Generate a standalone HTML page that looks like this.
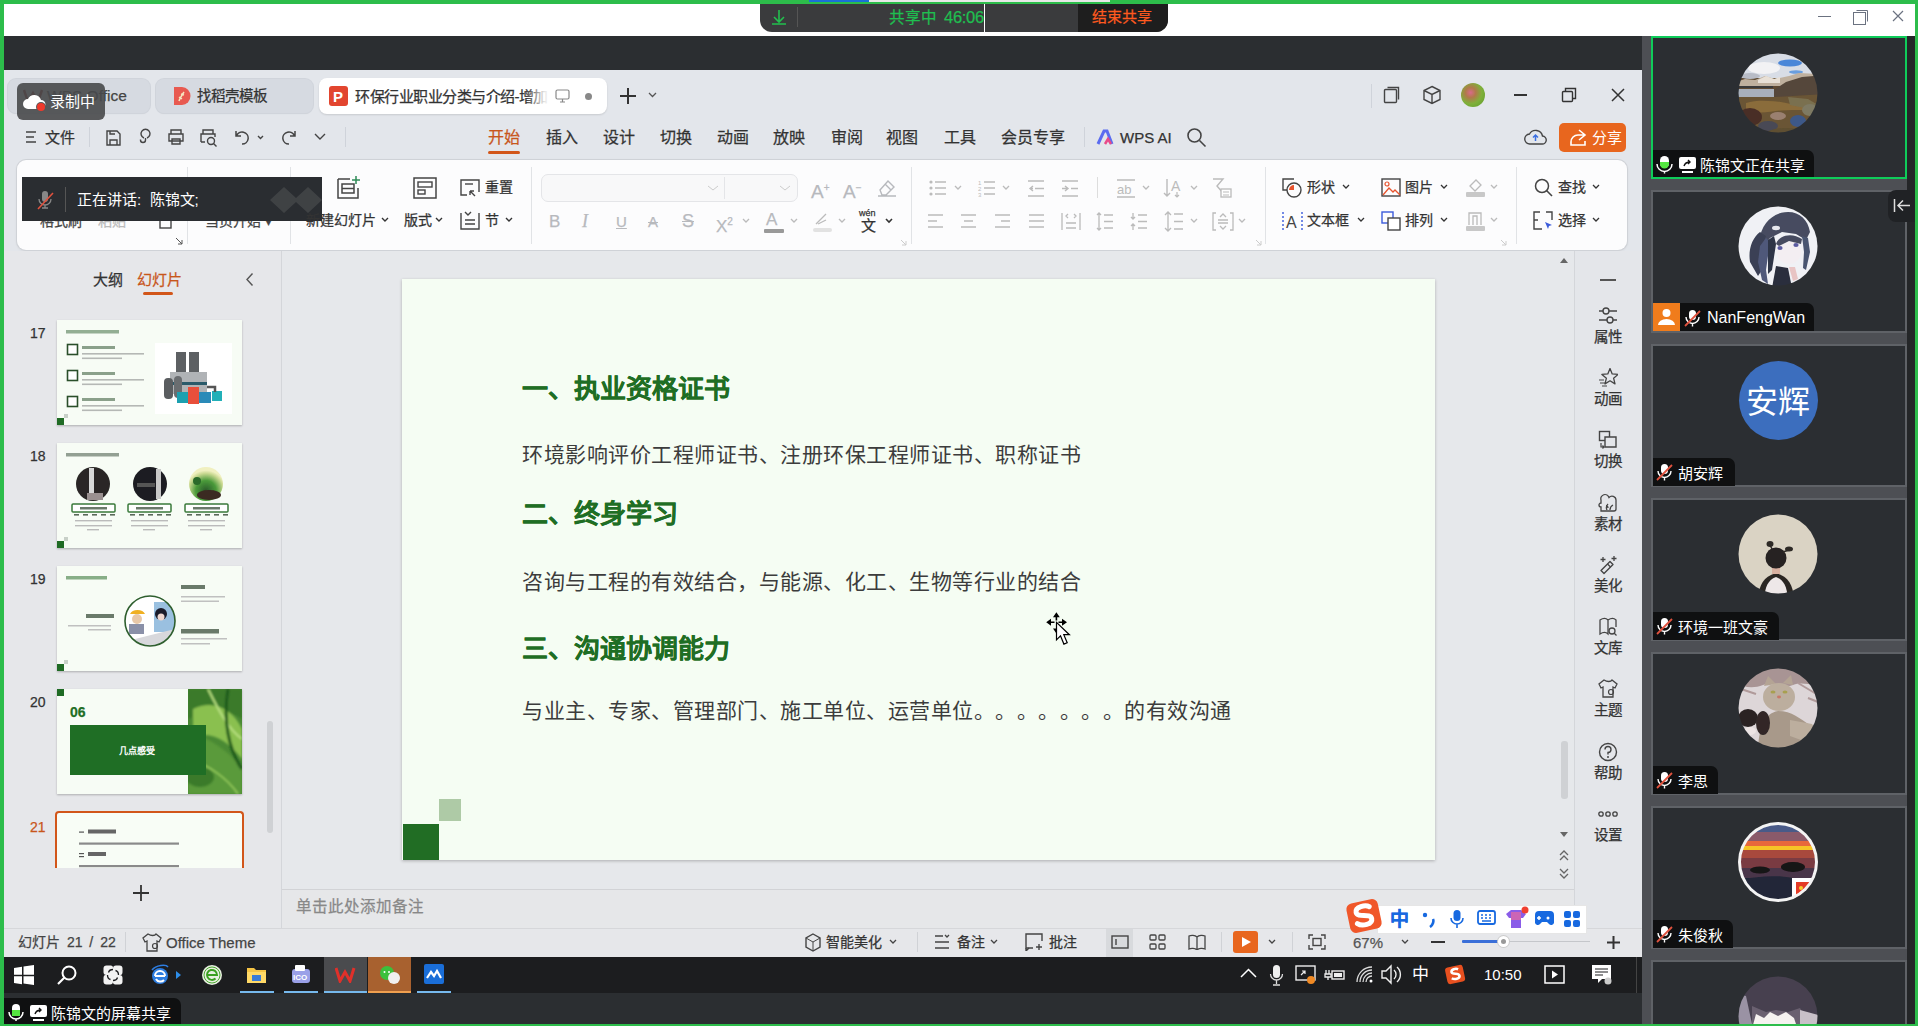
<!DOCTYPE html><html lang="zh-CN"><head><meta charset="utf-8"><style>
*{margin:0;padding:0;box-sizing:border-box}
html,body{width:1918px;height:1026px;overflow:hidden}
body{position:relative;background:#2dbd4b;font-family:"Liberation Sans",sans-serif}
body>div,body>svg{position:absolute}
.t{white-space:nowrap;text-spacing-trim:space-all;-webkit-text-stroke:0.25px currentColor}
</style></head><body><div style="left:4px;top:4px;width:1911px;height:32px;background:#fff"></div><div style="left:4px;top:36px;width:1638px;height:34px;background:#2b2e31"></div><div style="left:4px;top:70px;width:1638px;height:887px;background:#e3e6eb"></div><div style="left:4px;top:957px;width:1638px;height:36px;background:#1c1d1f"></div><div style="left:4px;top:993px;width:1638px;height:31px;background:#2b2e31"></div><div style="left:1642px;top:36px;width:273px;height:988px;background:#4d4f54"></div><div style="left:1907px;top:36px;width:8px;height:988px;background:#242628"></div><div style="left:809px;top:0px;width:60px;height:2px;background:#1a6fd8"></div><div style="left:869px;top:0px;width:241px;height:2px;background:#e8e8e8"></div><div style="left:760px;top:4px;width:408px;height:28px;background:#3a3b3d;border-radius:0 0 12px 12px"></div><div style="left:1078px;top:4px;width:90px;height:28px;background:#1e1e1e;border-radius:0 0 12px 0"></div><div style="left:797px;top:7px;width:1px;height:20px;background:#555"></div><svg style="left:770px;top:8px;" width="18" height="18" viewBox="0 0 18 18"><path d="M9 2v12M4 9l5 5 5-5M2 16h14" stroke="#22c04e" stroke-width="1.6" fill="none"/></svg><div class="t" style="left:889px;top:8.2px;font-size:15.5px;line-height:19.5px;color:#1fbf50;">共享中</div><div class="t" style="left:944px;top:7.2px;font-size:16.5px;line-height:20.5px;color:#1fbf50;letter-spacing:-0.3px">46:06</div><div style="left:984px;top:4px;width:1px;height:28px;background:#fff"></div><div class="t" style="left:1092px;top:6.5px;font-size:15px;line-height:19px;color:#ff5a1f;">结束共享</div><div style="left:1818px;top:16px;width:13px;height:1px;background:#6b7280"></div><svg style="left:1853px;top:9px;" width="17" height="16" viewBox="0 0 17 16"><rect x="0.5" y="3.5" width="12" height="12" fill="none" stroke="#6b7280"/><path d="M3.5 1.5h11v11" fill="none" stroke="#6b7280"/></svg><svg style="left:1892px;top:10px;" width="12" height="12" viewBox="0 0 12 12"><path d="M1 1l10 10M11 1L1 11" stroke="#6b7280" stroke-width="1.2"/></svg><div style="left:8px;top:79px;width:142px;height:34px;background:#d6dae1;border-radius:8px;box-shadow:0 0 0 1px #d0d4db,0 1px 1px #cdd1d8"></div><div style="left:156px;top:79px;width:157px;height:34px;background:#d6dae1;border-radius:8px;box-shadow:0 0 0 1px #d0d4db,0 1px 1px #cdd1d8"></div><div style="left:319px;top:78px;width:288px;height:36px;background:#fff;border-radius:8px;box-shadow:0 1px 2px rgba(0,0,0,.12)"></div><svg style="left:22px;top:88px;" width="22" height="16" viewBox="0 0 22 16"><path d="M2 2l4 12 5-9 5 9 4-12" stroke="#8b2a22" stroke-width="2.4" fill="none"/></svg><div class="t" style="left:47px;top:86.2px;font-size:15.5px;line-height:19.5px;color:#444;">WPS Office</div><div style="left:17px;top:83px;width:88px;height:37px;background:rgba(72,73,75,.9);border-radius:6px"></div><svg style="left:22px;top:91px;" width="26" height="22" viewBox="0 0 26 22"><path d="M6 18a5 5 0 0 1 0-10a7 7 0 0 1 13 1a4.5 4.5 0 0 1 0 9z" fill="#fff"/><circle cx="19" cy="16" r="5" fill="#575859"/><circle cx="19" cy="16" r="4" fill="#f03a2c"/></svg><div class="t" style="left:50px;top:91.5px;font-size:15px;line-height:19px;color:#fff;-webkit-text-stroke:0;">录制中</div><svg style="left:173px;top:86px;" width="18" height="20" viewBox="0 0 18 20"><path d="M1 1h8a8.5 9 0 0 1 0 18H1z" fill="#e85a50"/><path d="M6 15c1-3 3-6 5-9M6 11l3 2M8 8l3 1" stroke="#f6e8c0" stroke-width="1.5" fill="none"/></svg><div class="t" style="left:197px;top:86.8px;font-size:14.5px;line-height:18.5px;color:#333;">找稻壳模板</div><div style="left:329px;top:86px;width:19px;height:20px;background:#e2452f;border-radius:3px"></div><div class="t" style="left:333px;top:86.5px;font-size:15px;line-height:19px;color:#fff;-webkit-text-stroke:0;font-weight:bold">P</div><div class="t" style="left:355px;top:86.5px;font-size:15px;line-height:19px;color:#333;letter-spacing:-0.5px">环保行业职业分类与介绍-增加</div><div style="left:527px;top:82px;width:24px;height:28px;background:linear-gradient(90deg,rgba(255,255,255,0),rgba(255,255,255,.85) 70%,#fff)"></div><svg style="left:555px;top:89px;" width="15" height="14" viewBox="0 0 15 14"><rect x="1" y="1" width="13" height="9" rx="1.5" fill="none" stroke="#888" stroke-width="1.2"/><path d="M5 13h5M7.5 10v3" stroke="#888" stroke-width="1.2"/></svg><div style="left:585px;top:93px;width:7px;height:7px;border-radius:50%;background:#888"></div><svg style="left:619px;top:87px;" width="18" height="18" viewBox="0 0 18 18"><path d="M9 1v16M1 9h16" stroke="#333" stroke-width="2"/></svg><svg style="left:648px;top:92px;" width="9" height="6" viewBox="0 0 9 6"><path d="M1 1l3.5 3.5L8 1" stroke="#555" stroke-width="1.3" fill="none"/></svg><div style="left:1371px;top:84px;width:1px;height:24px;background:#cfd3da"></div><svg style="left:1383px;top:86px;" width="18" height="18" viewBox="0 0 18 18"><rect x="1.5" y="3.5" width="12" height="13" rx="1" fill="none" stroke="#444" stroke-width="1.4"/><path d="M4.5 1.5h11v12" fill="none" stroke="#444" stroke-width="1.4"/></svg><svg style="left:1422px;top:85px;" width="20" height="20" viewBox="0 0 20 20"><path d="M10 1.5l8 4v9l-8 4-8-4v-9z M2 5.5l8 4 8-4M10 9.5v9" fill="none" stroke="#444" stroke-width="1.4"/></svg><div style="left:1461px;top:83px;width:24px;height:24px;border-radius:50%;background:radial-gradient(circle at 40% 40%,#d96a8a 0,#b07a4a 25%,#7fb03a 55%,#5c9a2a 100%)"></div><div style="left:1514px;top:94px;width:13px;height:1.5px;background:#333"></div><svg style="left:1561px;top:87px;" width="17" height="16" viewBox="0 0 17 16"><rect x="1.5" y="4.5" width="10" height="10" rx="1" fill="none" stroke="#333" stroke-width="1.4"/><path d="M4.5 4.5v-3h10v10h-3" fill="none" stroke="#333" stroke-width="1.4"/></svg><svg style="left:1610px;top:87px;" width="16" height="16" viewBox="0 0 16 16"><path d="M2 2l12 12M14 2L2 14" stroke="#333" stroke-width="1.5"/></svg><svg style="left:25px;top:130px;" width="12" height="14" viewBox="0 0 12 14"><path d="M1 2h10M1 7h8M1 12h10" stroke="#444" stroke-width="1.4"/></svg><div class="t" style="left:45px;top:127.5px;font-size:15px;line-height:19px;color:#333;">文件</div><div style="left:89px;top:127px;width:1px;height:20px;background:#cfd3da"></div><svg style="left:105px;top:129px;" width="17" height="18" viewBox="0 0 17 18"><path d="M2 2h10l3 3v11H2z M5 16v-5h7v5 M5 2v3h5" fill="none" stroke="#444" stroke-width="1.4"/></svg><svg style="left:137px;top:128px;" width="15" height="19" viewBox="0 0 15 19"><path d="M7 10a4.5 4.5 0 1 1 3 0 M8.5 10v2a2.5 2.5 0 1 1-5 0v-.5" fill="none" stroke="#444" stroke-width="1.4"/></svg><svg style="left:167px;top:128px;" width="18" height="18" viewBox="0 0 18 18"><path d="M4 6V2h10v4 M2 6h14v7H2z M5 11h8v5H5z" fill="none" stroke="#444" stroke-width="1.4"/></svg><svg style="left:199px;top:128px;" width="19" height="19" viewBox="0 0 19 19"><path d="M4 6V2h10v4 M2 14V6h14v3 M2 14h4" fill="none" stroke="#444" stroke-width="1.4"/><circle cx="12" cy="13" r="3.5" fill="none" stroke="#444" stroke-width="1.4"/><path d="M14.5 15.5l3 3" stroke="#444" stroke-width="1.4"/></svg><svg style="left:233px;top:128px;" width="16" height="18" viewBox="0 0 16 18"><path d="M3 3v5h5 M3.5 8A6 6 0 1 1 9 16" fill="none" stroke="#444" stroke-width="1.5"/></svg><svg style="left:257px;top:135px;" width="7" height="5" viewBox="0 0 7 5"><path d="M1 1l2.5 2.5L6 1" stroke="#444" stroke-width="1.4" fill="none"/></svg><svg style="left:282px;top:128px;" width="16" height="18" viewBox="0 0 16 18"><path d="M13 3v5H8 M12.5 8A6 6 0 1 0 7 16" fill="none" stroke="#444" stroke-width="1.5"/></svg><svg style="left:314px;top:133px;" width="12" height="8" viewBox="0 0 12 8"><path d="M1 1l5 5 5-5" stroke="#444" stroke-width="1.4" fill="none"/></svg><div style="left:345px;top:127px;width:1px;height:20px;background:#cfd3da"></div><div class="t" style="left:488px;top:128.0px;font-size:16px;line-height:20px;color:#c8561c;">开始</div><div class="t" style="left:546px;top:128.0px;font-size:16px;line-height:20px;color:#333;">插入</div><div class="t" style="left:603px;top:128.0px;font-size:16px;line-height:20px;color:#333;">设计</div><div class="t" style="left:660px;top:128.0px;font-size:16px;line-height:20px;color:#333;">切换</div><div class="t" style="left:717px;top:128.0px;font-size:16px;line-height:20px;color:#333;">动画</div><div class="t" style="left:773px;top:128.0px;font-size:16px;line-height:20px;color:#333;">放映</div><div class="t" style="left:831px;top:128.0px;font-size:16px;line-height:20px;color:#333;">审阅</div><div class="t" style="left:886px;top:128.0px;font-size:16px;line-height:20px;color:#333;">视图</div><div class="t" style="left:944px;top:128.0px;font-size:16px;line-height:20px;color:#333;">工具</div><div class="t" style="left:1001px;top:128.0px;font-size:16px;line-height:20px;color:#333;">会员专享</div><div style="left:488px;top:151px;width:32px;height:3px;background:#d2561a;border-radius:2px"></div><div style="left:1084px;top:127px;width:1px;height:20px;background:#cfd3da"></div><svg style="left:1096px;top:129px;" width="18" height="16" viewBox="0 0 18 16"><path d="M2 15L8 2h3l5 13" stroke="#5b6cf0" stroke-width="3" fill="none"/><path d="M9 15l3-5 3 5" stroke="#e84a8a" stroke-width="2.5" fill="none"/></svg><div class="t" style="left:1120px;top:127.5px;font-size:15px;line-height:19px;color:#333;">WPS AI</div><svg style="left:1186px;top:127px;" width="21" height="21" viewBox="0 0 21 21"><circle cx="8.5" cy="8.5" r="6.5" fill="none" stroke="#444" stroke-width="1.6"/><path d="M13.5 13.5l6 6" stroke="#444" stroke-width="1.6"/></svg><svg style="left:1524px;top:127px;" width="23" height="19" viewBox="0 0 23 19"><path d="M6 17a5 5 0 0 1-.5-10 7 7 0 0 1 13 2 4 4 0 0 1-.5 8z" fill="none" stroke="#444" stroke-width="1.4"/><path d="M11.5 14V8M9 10.5l2.5-2.5 2.5 2.5" stroke="#3b6fe0" stroke-width="1.5" fill="none"/></svg><div style="left:1559px;top:123px;width:67px;height:29px;background:#e8661e;border-radius:5px"></div><svg style="left:1567px;top:128px;" width="21" height="19" viewBox="0 0 21 19"><path d="M12 2l6 5-6 5 M18 7h-7a7 7 0 0 0-7 7v3h14v-4" fill="none" stroke="#fff" stroke-width="1.6"/></svg><div class="t" style="left:1592px;top:127.5px;font-size:15px;line-height:19px;color:#fff;-webkit-text-stroke:0;">分享</div><div style="left:17px;top:160px;width:1610px;height:90px;background:#fcfcfd;border-radius:9px;box-shadow:0 0 0 1px #cfd2d7, 0 1px 3px rgba(0,0,0,.10)"></div><div class="t" style="left:40px;top:212.0px;font-size:14px;line-height:18px;color:#444;">格式刷</div><div class="t" style="left:98px;top:212.0px;font-size:14px;line-height:18px;color:#bbb;">粘贴</div><svg style="left:153px;top:212px;" width="20" height="18" viewBox="0 0 20 18"><rect x="1" y="1" width="9" height="7" fill="none" stroke="#3b6fe0" stroke-width="1.3"/><rect x="7" y="5" width="11" height="11" fill="none" stroke="#444" stroke-width="1.4"/></svg><svg style="left:175px;top:237px;" width="8" height="8" viewBox="0 0 8 8"><path d="M1 1l6 6M7 3v4H3" stroke="#555" fill="none"/></svg><div class="t" style="left:205px;top:212.0px;font-size:14px;line-height:18px;color:#444;">当页开始 ▾</div><div style="left:187px;top:167px;width:1px;height:77px;background:#e1e3e6"></div><div style="left:290px;top:167px;width:1px;height:77px;background:#e1e3e6"></div><div style="left:22px;top:177px;width:300px;height:44px;background:#2a2d31"></div><svg style="left:36px;top:190px;" width="18" height="20" viewBox="0 0 18 20"><rect x="6" y="1" width="6" height="11" rx="3" fill="#888"/><path d="M3 9a6 6 0 0 0 12 0M9 15v3M6 18h6" stroke="#888" stroke-width="1.3" fill="none"/><path d="M2 19L17 3" stroke="#e0523e" stroke-width="1.6"/></svg><div style="left:65px;top:187px;width:1px;height:25px;background:#555"></div><div class="t" style="left:77px;top:189.5px;font-size:15px;line-height:19px;color:#fff;-webkit-text-stroke:0;">正在讲话:&nbsp;&nbsp;陈锦文;</div><svg style="left:270px;top:185px;" width="52" height="30" viewBox="0 0 52 30"><path d="M0 15l14-13 12 11 12-11 14 13-14 13-12-11-12 11z" fill="#45474a" opacity=".8"/></svg><svg style="left:336px;top:175px;" width="26" height="25" viewBox="0 0 26 25"><path d="M2 4h12 M2 4v19h20v-10 M6 9h12v9H6z M6 13.5h12" fill="none" stroke="#444" stroke-width="1.5"/><path d="M20 1v8M16 5h8" stroke="#2e8b57" stroke-width="1.5"/></svg><div class="t" style="left:306px;top:211.0px;font-size:14px;line-height:18px;color:#333;">新建幻灯片</div><svg style="left:381px;top:217px;" width="8" height="6" viewBox="0 0 8 6"><path d="M1 1l3 3 3-3" stroke="#333" stroke-width="1.4" fill="none"/></svg><svg style="left:413px;top:177px;" width="24" height="22" viewBox="0 0 24 22"><rect x="1" y="1" width="22" height="20" fill="none" stroke="#444" stroke-width="1.5"/><rect x="5" y="5" width="14" height="5" fill="none" stroke="#444" stroke-width="1.4"/><rect x="5" y="13" width="7" height="4" fill="none" stroke="#444" stroke-width="1.4"/></svg><div class="t" style="left:404px;top:211.0px;font-size:14px;line-height:18px;color:#333;">版式</div><svg style="left:435px;top:217px;" width="8" height="6" viewBox="0 0 8 6"><path d="M1 1l3 3 3-3" stroke="#333" stroke-width="1.4" fill="none"/></svg><svg style="left:459px;top:178px;" width="22" height="19" viewBox="0 0 22 19"><path d="M8 17H2V2h18v12" fill="none" stroke="#444" stroke-width="1.4"/><path d="M6 6h8" stroke="#444" stroke-width="1.4"/><path d="M16 18l-5-5M11 13v4M11 13h4" stroke="#444" stroke-width="1.4" fill="none"/></svg><div class="t" style="left:485px;top:178.0px;font-size:14px;line-height:18px;color:#333;">重置</div><svg style="left:459px;top:211px;" width="22" height="19" viewBox="0 0 22 19"><path d="M2 2v16h18V2 M6 1l3 3 3-3 M6 9h10M6 13h10" fill="none" stroke="#444" stroke-width="1.4"/></svg><div class="t" style="left:485px;top:211.0px;font-size:14px;line-height:18px;color:#333;">节</div><svg style="left:505px;top:217px;" width="8" height="6" viewBox="0 0 8 6"><path d="M1 1l3 3 3-3" stroke="#333" stroke-width="1.4" fill="none"/></svg><div style="left:531px;top:167px;width:1px;height:77px;background:#e1e3e6"></div><div style="left:541px;top:174px;width:257px;height:28px;background:#f8f8f9;border:1px solid #e4e5e8;border-radius:7px"></div><div style="left:724px;top:177px;width:1px;height:22px;background:#e4e5e8"></div><svg style="left:707px;top:185px;" width="12" height="6" viewBox="0 0 12 6"><path d="M1 1l5 4 5-4" stroke="#ccc" fill="none"/></svg><svg style="left:779px;top:185px;" width="12" height="6" viewBox="0 0 12 6"><path d="M1 1l5 4 5-4" stroke="#ccc" fill="none"/></svg><div class="t" style="left:811px;top:175.5px;font-size:19px;line-height:23px;color:#b7b9bd;">A<sup style="font-size:10px">+</sup></div><div class="t" style="left:843px;top:175.5px;font-size:19px;line-height:23px;color:#b7b9bd;">A<sup style="font-size:10px">−</sup></div><svg style="left:876px;top:178px;" width="22" height="20" viewBox="0 0 22 20"><path d="M4 12l8-9 6 6-8 8H6z M9 6l6 6 M2 18h18" fill="none" stroke="#b7b9bd" stroke-width="1.4"/></svg><div class="t" style="left:549px;top:210.5px;font-size:17px;line-height:21px;color:#b7b9bd;">B</div><div class="t" style="left:582px;top:210.0px;font-size:18px;line-height:22px;color:#b7b9bd;font-family:Liberation Serif"><i>I</i></div><div class="t" style="left:616px;top:211.5px;font-size:15px;line-height:19px;color:#b7b9bd;"><u>U</u></div><div class="t" style="left:648px;top:211.5px;font-size:15px;line-height:19px;color:#b7b9bd;text-decoration:line-through">A</div><div class="t" style="left:682px;top:210.0px;font-size:18px;line-height:22px;color:#b7b9bd;text-decoration:line-through">S</div><div class="t" style="left:716px;top:210.5px;font-size:17px;line-height:21px;color:#b7b9bd;">X<sup style="font-size:10px">2</sup></div><svg style="left:742px;top:218px;" width="8" height="6" viewBox="0 0 8 6"><path d="M1 1l3 3 3-3" stroke="#bbb" stroke-width="1.3" fill="none"/></svg><div class="t" style="left:766px;top:208.5px;font-size:17px;line-height:21px;color:#b7b9bd;">A</div><div style="left:764px;top:229px;width:20px;height:4px;background:#999;border-radius:1px"></div><svg style="left:790px;top:218px;" width="8" height="6" viewBox="0 0 8 6"><path d="M1 1l3 3 3-3" stroke="#bbb" stroke-width="1.3" fill="none"/></svg><svg style="left:812px;top:210px;" width="20" height="24" viewBox="0 0 20 24"><path d="M4 14l10-10M6 14l8-4" stroke="#bbb" stroke-width="1.3" fill="none"/><rect x="1" y="18" width="19" height="4" rx="2" fill="#e2e2e2"/></svg><svg style="left:838px;top:218px;" width="8" height="6" viewBox="0 0 8 6"><path d="M1 1l3 3 3-3" stroke="#bbb" stroke-width="1.3" fill="none"/></svg><div class="t" style="left:859px;top:206.5px;font-size:9px;line-height:13px;color:#333;">wén</div><div class="t" style="left:861px;top:215.5px;font-size:15px;line-height:19px;color:#333;">文</div><svg style="left:885px;top:218px;" width="8" height="6" viewBox="0 0 8 6"><path d="M1 1l3 3 3-3" stroke="#333" stroke-width="1.6" fill="none"/></svg><svg style="left:900px;top:239px;" width="7" height="7" viewBox="0 0 7 7"><path d="M1 1l5 5M6 2v4H2" stroke="#ccc" fill="none"/></svg><div style="left:911px;top:167px;width:1px;height:77px;background:#e1e3e6"></div><svg style="left:929px;top:180px;" width="18" height="16" viewBox="0 0 18 16"><circle cx="2" cy="2" r="1.6" fill="#bbb"/><circle cx="2" cy="8" r="1.6" fill="#bbb"/><circle cx="2" cy="14" r="1.6" fill="#bbb"/><path d="M6 2h11M6 8h11M6 14h11" stroke="#bbb" stroke-width="1.4"/></svg><svg style="left:954px;top:185px;" width="8" height="6" viewBox="0 0 8 6"><path d="M1 1l3 3 3-3" stroke="#bbb" stroke-width="1.3" fill="none"/></svg><svg style="left:978px;top:179px;" width="18" height="18" viewBox="0 0 18 18"><text x="0" y="6" font-size="6" fill="#bbb">1</text><text x="0" y="12" font-size="6" fill="#bbb">2</text><text x="0" y="18" font-size="6" fill="#bbb">3</text><path d="M6 3h11M6 9h11M6 15h11" stroke="#bbb" stroke-width="1.4"/></svg><svg style="left:1002px;top:185px;" width="8" height="6" viewBox="0 0 8 6"><path d="M1 1l3 3 3-3" stroke="#bbb" stroke-width="1.3" fill="none"/></svg><svg style="left:1027px;top:180px;" width="18" height="17" viewBox="0 0 18 17"><path d="M1 1h16M8 8.5h9M1 16h16M6 6l-3 2.5 3 2.5M3 8.5h3" stroke="#bbb" stroke-width="1.4" fill="none"/></svg><svg style="left:1061px;top:180px;" width="18" height="17" viewBox="0 0 18 17"><path d="M1 1h16M10 8.5h7M1 16h16M4 6l3 2.5-3 2.5M1 8.5h6" stroke="#bbb" stroke-width="1.4" fill="none"/></svg><div style="left:1097px;top:177px;width:1px;height:21px;background:#ddd"></div><svg style="left:1116px;top:179px;" width="20" height="19" viewBox="0 0 20 19"><path d="M1 1h18M1 18h18" stroke="#bbb" stroke-width="1.4"/><text x="1" y="15" font-size="13" fill="#bbb" font-family="Liberation Sans">ab</text></svg><svg style="left:1142px;top:185px;" width="8" height="6" viewBox="0 0 8 6"><path d="M1 1l3 3 3-3" stroke="#bbb" stroke-width="1.3" fill="none"/></svg><svg style="left:1163px;top:178px;" width="22" height="20" viewBox="0 0 22 20"><path d="M4 1v17M1 15l3 3 3-3" stroke="#bbb" stroke-width="1.4" fill="none"/><text x="8" y="13" font-size="14" fill="#bbb" font-family="Liberation Sans">A</text><path d="M14 14v5M12 17l2 2 2-2" stroke="#bbb" stroke-width="1.2" fill="none"/></svg><svg style="left:1190px;top:185px;" width="8" height="6" viewBox="0 0 8 6"><path d="M1 1l3 3 3-3" stroke="#bbb" stroke-width="1.3" fill="none"/></svg><svg style="left:1212px;top:178px;" width="20" height="20" viewBox="0 0 20 20"><path d="M1 1h10l-6 7 6 7" stroke="#bbb" stroke-width="1.4" fill="none"/><rect x="9" y="11" width="10" height="8" fill="#fff" stroke="#bbb" stroke-width="1.3"/><path d="M11 14h6M11 17h6" stroke="#bbb"/></svg><svg style="left:927px;top:214px;" width="18" height="15" viewBox="0 0 18 15"><path d="M1 1h15M1 7h9M1 13h15" stroke="#bbb" stroke-width="1.4"/></svg><svg style="left:960px;top:214px;" width="18" height="15" viewBox="0 0 18 15"><path d="M1 1h15M4 7h9M1 13h15" stroke="#bbb" stroke-width="1.4"/></svg><svg style="left:994px;top:214px;" width="18" height="15" viewBox="0 0 18 15"><path d="M1 1h15M7 7h9M1 13h15" stroke="#bbb" stroke-width="1.4"/></svg><svg style="left:1028px;top:214px;" width="18" height="15" viewBox="0 0 18 15"><path d="M1 1h15M1 7h15M1 13h15" stroke="#bbb" stroke-width="1.4"/></svg><svg style="left:1061px;top:212px;" width="20" height="19" viewBox="0 0 20 19"><path d="M1 1v17M19 1v17M5 11h10M5 16h10M7 2l-2 2 2 2M13 2l2 2-2 2" stroke="#bbb" stroke-width="1.3" fill="none"/></svg><svg style="left:1096px;top:212px;" width="18" height="19" viewBox="0 0 18 19"><path d="M3 1v17M1 3l2-2 2 2M1 16l2 2 2-2M8 3h9M8 9.5h9M8 16h9" stroke="#bbb" stroke-width="1.3" fill="none"/></svg><svg style="left:1130px;top:212px;" width="18" height="19" viewBox="0 0 18 19"><path d="M3 1v6M3 12v6M1 5l2 2 2-2M1 14l2-2 2 2M8 3h9M8 9.5h9M8 16h9" stroke="#bbb" stroke-width="1.3" fill="none"/></svg><svg style="left:1164px;top:211px;" width="20" height="21" viewBox="0 0 20 21"><path d="M4 1v19M1 4l3-3 3 3M1 17l3 3 3-3M10 3h9M10 10.5h9M10 18h9" stroke="#bbb" stroke-width="1.3" fill="none"/></svg><svg style="left:1190px;top:218px;" width="8" height="6" viewBox="0 0 8 6"><path d="M1 1l3 3 3-3" stroke="#bbb" stroke-width="1.3" fill="none"/></svg><svg style="left:1212px;top:211px;" width="22" height="21" viewBox="0 0 22 21"><path d="M4 2H1v17h3M18 2h3v17h-3M6 9h10M6 12h10M8 6l3-3 3 3M8 15l3 3 3-3" stroke="#bbb" stroke-width="1.3" fill="none"/></svg><svg style="left:1238px;top:218px;" width="8" height="6" viewBox="0 0 8 6"><path d="M1 1l3 3 3-3" stroke="#bbb" stroke-width="1.3" fill="none"/></svg><svg style="left:1255px;top:239px;" width="7" height="7" viewBox="0 0 7 7"><path d="M1 1l5 5M6 2v4H2" stroke="#ccc" fill="none"/></svg><div style="left:1265px;top:167px;width:1px;height:77px;background:#e1e3e6"></div><svg style="left:1282px;top:178px;" width="21" height="20" viewBox="0 0 21 20"><path d="M12 1H1v11h4" fill="none" stroke="#444" stroke-width="1.4"/><circle cx="12" cy="12" r="7" fill="none" stroke="#444" stroke-width="1.4"/><path d="M7 12a5 5 0 0 1 5-5v5z" fill="#e8542e"/></svg><div class="t" style="left:1307px;top:178.0px;font-size:14px;line-height:18px;color:#333;">形状</div><svg style="left:1342px;top:184px;" width="8" height="6" viewBox="0 0 8 6"><path d="M1 1l3 3 3-3" stroke="#333" stroke-width="1.3" fill="none"/></svg><svg style="left:1282px;top:211px;" width="21" height="20" viewBox="0 0 21 20"><path d="M1 1v18M20 1v18" stroke="#3b5bdb" stroke-width="1.4" stroke-dasharray="2 2"/><text x="4" y="17" font-size="16" fill="#444" font-family="Liberation Sans">A</text></svg><div class="t" style="left:1307px;top:211.0px;font-size:14px;line-height:18px;color:#333;">文本框</div><svg style="left:1357px;top:217px;" width="8" height="6" viewBox="0 0 8 6"><path d="M1 1l3 3 3-3" stroke="#333" stroke-width="1.3" fill="none"/></svg><svg style="left:1381px;top:178px;" width="20" height="19" viewBox="0 0 20 19"><rect x="1" y="1" width="18" height="17" fill="none" stroke="#444" stroke-width="1.4"/><circle cx="6" cy="6" r="2" fill="none" stroke="#e8542e" stroke-width="1.2"/><path d="M2 17l6-7 4 4 2-2 5 5" stroke="#e8542e" stroke-width="1.3" fill="none"/></svg><div class="t" style="left:1405px;top:178.0px;font-size:14px;line-height:18px;color:#333;">图片</div><svg style="left:1440px;top:184px;" width="8" height="6" viewBox="0 0 8 6"><path d="M1 1l3 3 3-3" stroke="#333" stroke-width="1.3" fill="none"/></svg><svg style="left:1381px;top:211px;" width="20" height="20" viewBox="0 0 20 20"><rect x="1" y="1" width="11" height="11" fill="none" stroke="#3b5bdb" stroke-width="1.4"/><rect x="7" y="7" width="12" height="12" fill="#fff" stroke="#444" stroke-width="1.4"/></svg><div class="t" style="left:1405px;top:211.0px;font-size:14px;line-height:18px;color:#333;">排列</div><svg style="left:1440px;top:217px;" width="8" height="6" viewBox="0 0 8 6"><path d="M1 1l3 3 3-3" stroke="#333" stroke-width="1.3" fill="none"/></svg><svg style="left:1465px;top:177px;" width="20" height="22" viewBox="0 0 20 22"><path d="M5 9l6-6 5 5-6 6z" stroke="#bbb" fill="none" stroke-width="1.3"/><rect x="1" y="15" width="19" height="5" rx="1" fill="#c8c8c8"/></svg><svg style="left:1490px;top:184px;" width="8" height="6" viewBox="0 0 8 6"><path d="M1 1l3 3 3-3" stroke="#bbb" stroke-width="1.3" fill="none"/></svg><svg style="left:1465px;top:211px;" width="20" height="22" viewBox="0 0 20 22"><path d="M4 14V2h12v12M8 14V5h4v9" stroke="#bbb" fill="none" stroke-width="1.3"/><rect x="1" y="15" width="19" height="5" rx="1" fill="#c8c8c8"/></svg><svg style="left:1490px;top:217px;" width="8" height="6" viewBox="0 0 8 6"><path d="M1 1l3 3 3-3" stroke="#bbb" stroke-width="1.3" fill="none"/></svg><svg style="left:1500px;top:239px;" width="7" height="7" viewBox="0 0 7 7"><path d="M1 1l5 5M6 2v4H2" stroke="#ccc" fill="none"/></svg><div style="left:1516px;top:167px;width:1px;height:77px;background:#e1e3e6"></div><svg style="left:1534px;top:178px;" width="19" height="19" viewBox="0 0 19 19"><circle cx="8" cy="8" r="6.5" fill="none" stroke="#444" stroke-width="1.5"/><path d="M12.5 12.5l5.5 5.5" stroke="#444" stroke-width="1.6"/></svg><div class="t" style="left:1558px;top:178.0px;font-size:14px;line-height:18px;color:#333;">查找</div><svg style="left:1592px;top:184px;" width="8" height="6" viewBox="0 0 8 6"><path d="M1 1l3 3 3-3" stroke="#333" stroke-width="1.3" fill="none"/></svg><svg style="left:1533px;top:211px;" width="20" height="20" viewBox="0 0 20 20"><path d="M7 1H1v17h8M13 1h6v8M1 9h4" stroke="#444" fill="none" stroke-width="1.4"/><path d="M12 11l7 3-3 1-1 3z" fill="#3b5bdb"/></svg><div class="t" style="left:1558px;top:211.0px;font-size:14px;line-height:18px;color:#333;">选择</div><svg style="left:1592px;top:217px;" width="8" height="6" viewBox="0 0 8 6"><path d="M1 1l3 3 3-3" stroke="#333" stroke-width="1.3" fill="none"/></svg><div style="left:4px;top:251px;width:277px;height:678px;background:#e6e7ea"></div><div style="left:281px;top:251px;width:1px;height:678px;background:#d4d6da"></div><div style="left:282px;top:251px;width:1292px;height:638px;background:#e6e8eb"></div><div style="left:282px;top:889px;width:1292px;height:1px;background:#d2d3d6"></div><div style="left:282px;top:890px;width:1292px;height:39px;background:#e6e7e9"></div><div style="left:1574px;top:251px;width:1px;height:678px;background:#d4d6da"></div><div style="left:1575px;top:251px;width:67px;height:678px;background:#e4e6ea"></div><div style="left:4px;top:928px;width:1638px;height:1px;background:#d6d7da"></div><div style="left:4px;top:929px;width:1638px;height:28px;background:#e6e7ea"></div><div class="t" style="left:93px;top:269.5px;font-size:15px;line-height:19px;color:#333;">大纲</div><div class="t" style="left:137px;top:269.5px;font-size:15px;line-height:19px;color:#c8561c;">幻灯片</div><div style="left:143px;top:292px;width:30px;height:3px;background:#d2561a;border-radius:2px"></div><svg style="left:245px;top:272px;" width="9" height="15" viewBox="0 0 9 15"><path d="M7.5 1.5L2 7.5l5.5 6" stroke="#555" stroke-width="1.4" fill="none"/></svg><div class="t" style="left:30px;top:324.0px;font-size:14px;line-height:18px;color:#333;">17</div><div style="left:57px;top:320px;width:185px;height:105px;background:#f7fcf5;box-shadow:0 1px 2px rgba(0,0,0,.25)"></div><div style="left:57px;top:418px;width:7px;height:7px;background:#1f6b24"></div><div class="t" style="left:30px;top:447.0px;font-size:14px;line-height:18px;color:#333;">18</div><div style="left:57px;top:443px;width:185px;height:105px;background:#f7fcf5;box-shadow:0 1px 2px rgba(0,0,0,.25)"></div><div style="left:57px;top:541px;width:7px;height:7px;background:#1f6b24"></div><div class="t" style="left:30px;top:570.0px;font-size:14px;line-height:18px;color:#333;">19</div><div style="left:57px;top:566px;width:185px;height:105px;background:#f7fcf5;box-shadow:0 1px 2px rgba(0,0,0,.25)"></div><div style="left:57px;top:664px;width:7px;height:7px;background:#1f6b24"></div><div class="t" style="left:30px;top:693.0px;font-size:14px;line-height:18px;color:#333;">20</div><div style="left:57px;top:689px;width:185px;height:105px;background:#f7fcf5;box-shadow:0 1px 2px rgba(0,0,0,.25)"></div><div class="t" style="left:30px;top:818.0px;font-size:14px;line-height:18px;color:#c8561c;">21</div><div style="left:55px;top:811px;width:189px;height:58px;background:#f8fdf6;border:2px solid #d2561a;border-bottom:none;border-radius:4px 4px 0 0"></div><svg style="left:57px;top:320px;" width="185" height="105" viewBox="0 0 185 105"><defs><filter id="tb"><feGaussianBlur stdDeviation="0.35"/></filter></defs><g filter="url(#tb)"><rect x="9" y="10" width="53" height="3.5" fill="#7a9a7a" opacity=".8"/><rect x="10.5" y="24.5" width="10" height="10" fill="#fff" stroke="#2b4f2b" stroke-width="1.6"/><rect x="25" y="26" width="33" height="3" fill="#8aa08a"/><rect x="25" y="33" width="62" height="1.6" fill="#b5b8b5"/><rect x="25" y="37.5" width="40" height="1.6" fill="#b5b8b5"/><rect x="10.5" y="50.5" width="10" height="10" fill="#fff" stroke="#2b4f2b" stroke-width="1.6"/><rect x="25" y="52" width="33" height="3" fill="#8aa08a"/><rect x="25" y="59" width="62" height="1.6" fill="#b5b8b5"/><rect x="25" y="63.5" width="40" height="1.6" fill="#b5b8b5"/><rect x="10.5" y="76.5" width="10" height="10" fill="#fff" stroke="#2b4f2b" stroke-width="1.6"/><rect x="25" y="78" width="33" height="3" fill="#8aa08a"/><rect x="25" y="85" width="62" height="1.6" fill="#b5b8b5"/><rect x="25" y="89.5" width="40" height="1.6" fill="#b5b8b5"/><rect x="98" y="23" width="77" height="71" fill="#fff"/><rect x="119" y="32" width="10" height="22" fill="#5d6064"/><rect x="132" y="32" width="10" height="22" fill="#5d6064"/><rect x="113" y="52" width="37" height="22" fill="#b0b3b6"/><rect x="113" y="62" width="37" height="3" fill="#2a5a6a"/><rect x="107" y="58" width="9" height="21" rx="4" fill="#5a5d60"/><rect x="117" y="56" width="8" height="22" rx="4" fill="#6a6d70"/><rect x="120" y="72" width="11" height="11" fill="#1fa0b0"/><rect x="131" y="67" width="11" height="17" fill="#e8503a"/><rect x="142" y="72" width="12" height="11" fill="#2a8ab8"/><rect x="155" y="71" width="10" height="10" fill="#20b0b8"/><path d="M150 67h8v5" stroke="#555" stroke-width="2.5" fill="none"/></g></svg><svg style="left:57px;top:443px;" width="185" height="105" viewBox="0 0 185 105"><defs><filter id="tb2"><feGaussianBlur stdDeviation="0.35"/></filter><radialGradient id="g3" cx="50%" cy="70%" r="60%"><stop offset="0" stop-color="#2a5a2a"/><stop offset=".5" stop-color="#4a9a3a"/><stop offset=".85" stop-color="#c8d890"/><stop offset="1" stop-color="#f0f0c0"/></radialGradient></defs><g filter="url(#tb2)"><rect x="9" y="10" width="53" height="3.5" fill="#7a8a7a" opacity=".8"/><circle cx="36" cy="41" r="17" fill="#2a2826"/><rect x="32" y="25" width="5" height="32" fill="#d8d8d8"/><rect x="30" y="50" width="16" height="7" fill="#9a9090"/><circle cx="93" cy="41" r="17" fill="#1e1e22"/><rect x="99" y="26" width="5" height="30" fill="#c8c8c8"/><rect x="80" y="40" width="18" height="4" fill="#555"/><circle cx="149" cy="41" r="17" fill="url(#g3)"/><circle cx="140" cy="38" r="4" fill="#2a6a2a"/><ellipse cx="152" cy="52" rx="12" ry="5" fill="#3a2a20"/><rect x="15" y="61" width="43" height="8" rx="1" fill="#fff" stroke="#3a7a3a" stroke-width="1.5"/><rect x="23" y="64" width="27" height="2.5" fill="#6a7a6a"/><rect x="17" y="71" width="5" height="1.6" fill="#5a6a5a"/><rect x="26" y="71" width="5" height="1.6" fill="#5a6a5a"/><rect x="35" y="71" width="5" height="1.6" fill="#5a6a5a"/><rect x="44" y="71" width="5" height="1.6" fill="#5a6a5a"/><rect x="53" y="71" width="5" height="1.6" fill="#5a6a5a"/><rect x="18" y="77" width="37" height="1.4" fill="#bbb"/><rect x="18" y="82" width="37" height="1.4" fill="#bbb"/><rect x="30" y="86" width="12" height="1.4" fill="#bbb"/><rect x="71" y="61" width="43" height="8" rx="1" fill="#fff" stroke="#3a7a3a" stroke-width="1.5"/><rect x="79" y="64" width="27" height="2.5" fill="#6a7a6a"/><rect x="73" y="71" width="5" height="1.6" fill="#5a6a5a"/><rect x="82" y="71" width="5" height="1.6" fill="#5a6a5a"/><rect x="91" y="71" width="5" height="1.6" fill="#5a6a5a"/><rect x="100" y="71" width="5" height="1.6" fill="#5a6a5a"/><rect x="109" y="71" width="5" height="1.6" fill="#5a6a5a"/><rect x="74" y="77" width="37" height="1.4" fill="#bbb"/><rect x="74" y="82" width="37" height="1.4" fill="#bbb"/><rect x="86" y="86" width="12" height="1.4" fill="#bbb"/><rect x="128" y="61" width="43" height="8" rx="1" fill="#fff" stroke="#3a7a3a" stroke-width="1.5"/><rect x="136" y="64" width="27" height="2.5" fill="#6a7a6a"/><rect x="130" y="71" width="5" height="1.6" fill="#5a6a5a"/><rect x="139" y="71" width="5" height="1.6" fill="#5a6a5a"/><rect x="148" y="71" width="5" height="1.6" fill="#5a6a5a"/><rect x="157" y="71" width="5" height="1.6" fill="#5a6a5a"/><rect x="166" y="71" width="5" height="1.6" fill="#5a6a5a"/><rect x="131" y="77" width="37" height="1.4" fill="#bbb"/><rect x="131" y="82" width="37" height="1.4" fill="#bbb"/><rect x="143" y="86" width="12" height="1.4" fill="#bbb"/></g></svg><svg style="left:57px;top:566px;" width="185" height="105" viewBox="0 0 185 105"><defs><filter id="tb3"><feGaussianBlur stdDeviation="0.35"/></filter><clipPath id="cc19"><circle cx="93" cy="55" r="25"/></clipPath></defs><g filter="url(#tb3)"><rect x="9" y="10" width="41" height="3.5" fill="#6a9a6a" opacity=".8"/><rect x="29" y="48" width="28" height="4" fill="#6a7a6a"/><rect x="11" y="59" width="43" height="1.5" fill="#c0c0c0"/><rect x="31" y="63" width="23" height="1.5" fill="#c0c0c0"/><g clip-path="url(#cc19)"><rect x="60" y="25" width="70" height="60" fill="#fff"/><rect x="97" y="36" width="22" height="30" fill="#9ac0e0"/><circle cx="104" cy="48" r="6" fill="#1a1a2a"/><circle cx="104" cy="51" r="3.5" fill="#f0d8d0"/><path d="M73 48a8 6 0 0 1 15 0z" fill="#f0b020"/><circle cx="80" cy="53" r="5" fill="#e8c8a8"/><rect x="72" y="58" width="15" height="10" fill="#8a90a8"/><path d="M70 75l60-15v30H70z" fill="#d8d8dc"/></g><circle cx="93" cy="55" r="25" fill="none" stroke="#2e5e2e" stroke-width="1.6"/><rect x="124" y="19" width="24" height="4" fill="#6a7a6a"/><rect x="124" y="30" width="44" height="1.5" fill="#c0c0c0"/><rect x="124" y="34.5" width="38" height="1.5" fill="#c0c0c0"/><rect x="124" y="63" width="38" height="4.5" fill="#6a7a6a"/><rect x="124" y="72" width="46" height="1.5" fill="#c0c0c0"/><rect x="124" y="77" width="29" height="1.5" fill="#c0c0c0"/></g></svg><div style="left:64px;top:414px;width:4px;height:4px;background:#c8d0c8"></div><div style="left:64px;top:537px;width:4px;height:4px;background:#c8d0c8"></div><div style="left:64px;top:660px;width:4px;height:4px;background:#c8d0c8"></div><svg style="left:188px;top:689px;" width="54" height="105" viewBox="0 0 54 105"><defs><filter id="lf"><feGaussianBlur stdDeviation="0.8"/></filter></defs><rect width="54" height="105" fill="#4a8a34"/><g filter="url(#lf)"><path d="M0 0h54v30c-10-8-30-10-54 0z" fill="#3a7a2a"/><path d="M5 20c20-10 40 0 49 20v30c-15-20-35-30-49-20z" fill="#8ac050"/><path d="M0 45c15 0 40 15 54 35v25H0z" fill="#5a9a3a"/><path d="M20 0c10 20 20 40 34 50" stroke="#b8e080" stroke-width="2" fill="none"/><path d="M0 70c20 5 40 20 50 35" stroke="#9ad060" stroke-width="1.5" fill="none"/><path d="M40 0c-5 30 0 60 14 80" stroke="#1f5a1a" stroke-width="3" fill="none"/><ellipse cx="12" cy="88" rx="14" ry="10" fill="#3a7a2a"/></g></svg><div style="left:70px;top:725px;width:136px;height:50px;background:#1f6e25"></div><div class="t" style="left:70px;top:703.0px;font-size:14px;line-height:18px;color:#1f6e25;font-weight:bold">06</div><div style="left:57px;top:689px;width:7px;height:7px;background:#1f6b24"></div><div class="t" style="left:119px;top:744.5px;font-size:9px;line-height:13px;color:#fff;-webkit-text-stroke:0;font-weight:bold">几点感受</div><svg style="left:57px;top:812px;" width="185" height="56" viewBox="0 0 185 56"><defs><filter id="tb21"><feGaussianBlur stdDeviation="0.3"/></filter></defs><g filter="url(#tb21)"><rect x="22" y="19.5" width="5" height="1.2" fill="#555"/><rect x="31" y="17.5" width="28" height="4" fill="#666"/><rect x="22" y="30.5" width="100" height="2.2" fill="#8a8a8a"/><rect x="22" y="41" width="5" height="1.2" fill="#555"/><rect x="22" y="44" width="5" height="1.2" fill="#555"/><rect x="31" y="40" width="18" height="4" fill="#666"/><rect x="22" y="53" width="100" height="2.2" fill="#8a8a8a"/></g></svg><div style="left:55px;top:868px;width:189px;height:20px;background:#e6e7ea"></div><div style="left:267px;top:721px;width:6px;height:112px;background:#cfd1d4;border-radius:3px"></div><svg style="left:132px;top:884px;" width="18" height="18" viewBox="0 0 18 18"><path d="M9 1v16M1 9h16" stroke="#333" stroke-width="1.8"/></svg><div style="left:402px;top:279px;width:1033px;height:581px;background:#f5fdf3;box-shadow:0 1px 3px rgba(0,0,0,.25)"></div><div style="left:403px;top:824px;width:36px;height:36px;background:#216d24"></div><div style="left:439px;top:799px;width:22px;height:22px;background:#aecaa6"></div><div class="t" style="left:522px;top:374.0px;font-size:26px;line-height:30px;color:#1f6e24;font-weight:bold">一、执业资格证书</div><div class="t" style="left:522px;top:442.0px;font-size:21px;line-height:26px;color:#3c3c3c;letter-spacing:0.5px;-webkit-text-stroke:0">环境影响评价工程师证书、注册环保工程师证书、职称证书</div><div class="t" style="left:522px;top:499.0px;font-size:26px;line-height:30px;color:#1f6e24;font-weight:bold">二、终身学习</div><div class="t" style="left:522px;top:569.0px;font-size:21px;line-height:26px;color:#3c3c3c;letter-spacing:0.5px;-webkit-text-stroke:0">咨询与工程的有效结合，与能源、化工、生物等行业的结合</div><div class="t" style="left:522px;top:634.0px;font-size:26px;line-height:30px;color:#1f6e24;font-weight:bold">三、沟通协调能力</div><div class="t" style="left:522px;top:698.0px;font-size:21px;line-height:26px;color:#3c3c3c;letter-spacing:0.5px;-webkit-text-stroke:0">与业主、专家、管理部门、施工单位、运营单位。。。。。。。的有效沟通</div><svg style="left:1044px;top:609px;" width="28" height="40" viewBox="0 0 28 40"><path d="M12.4 11.5V6.5M10.5 13.3H6M14.5 13.3H19" stroke="#000" stroke-width="1.6"/><path d="M9 8.2L12.4 3.2 15.8 8.2z M7 9.8L2.2 13.3 7 16.8z M18 9.8L23 13.3 18 16.8z M9 19.5l3.4 5 0-5z" fill="#000"/><path d="M12.5 13.3V30.8l4-4 3.4 8.3 3.3-1.4-3.4-8h5.6z" fill="#fff" stroke="#000" stroke-width="1.2" stroke-linejoin="miter"/></svg><svg style="left:1559px;top:256px;" width="10" height="8" viewBox="0 0 10 8"><path d="M1 7l4-5 4 5z" fill="#666"/></svg><div style="left:1561px;top:741px;width:7px;height:58px;background:#cfd1d4;border-radius:3px"></div><svg style="left:1559px;top:831px;" width="10" height="8" viewBox="0 0 10 8"><path d="M1 1l4 5 4-5z" fill="#666"/></svg><svg style="left:1559px;top:850px;" width="10" height="11" viewBox="0 0 10 11"><path d="M1 5l4-4 4 4M1 10l4-4 4 4" stroke="#666" stroke-width="1.3" fill="none"/></svg><svg style="left:1559px;top:868px;" width="10" height="11" viewBox="0 0 10 11"><path d="M1 1l4 4 4-4M1 6l4 4 4-4" stroke="#666" stroke-width="1.3" fill="none"/></svg><div class="t" style="left:296px;top:897.2px;font-size:15.5px;line-height:19.5px;color:#888;">单击此处添加备注</div><div style="left:1600px;top:279px;width:16px;height:1.5px;background:#555"></div><svg style="left:1598px;top:306px;" width="20" height="20" viewBox="0 0 20 20"><path d="M1 5h4M11 5h8M1 14h8M15 14h4" stroke="#444" stroke-width="1.4"/><circle cx="8" cy="5" r="3" fill="none" stroke="#444" stroke-width="1.4"/><circle cx="12" cy="14" r="3" fill="none" stroke="#444" stroke-width="1.4"/></svg><div class="t" style="left:1594px;top:327.8px;font-size:14.5px;line-height:18.5px;color:#333;">属性</div><svg style="left:1598px;top:368px;" width="20" height="20" viewBox="0 0 20 20"><path d="M12.0 0.5L14.2 5.9L20.1 6.4L15.6 10.2L17.0 15.9L12.0 12.8L7.0 15.9L8.4 10.2L3.9 6.4L9.8 5.9z" fill="none" stroke="#444" stroke-width="1.3" stroke-linejoin="round"/><path d="M1 12h5M2 15h5M4 18h5" stroke="#444" stroke-width="1.2"/></svg><div class="t" style="left:1594px;top:389.8px;font-size:14.5px;line-height:18.5px;color:#333;">动画</div><svg style="left:1598px;top:430px;" width="20" height="20" viewBox="0 0 20 20"><rect x="1.5" y="1.5" width="10" height="9" fill="none" stroke="#444" stroke-width="1.4"/><path d="M7 7h11v10H7z" fill="#e4e6ea" stroke="#444" stroke-width="1.4"/><path d="M3 13v4h3M4.5 15.5L6 17l-1.5 1.5" stroke="#444" stroke-width="1.2" fill="none"/></svg><div class="t" style="left:1594px;top:451.8px;font-size:14.5px;line-height:18.5px;color:#333;">切换</div><svg style="left:1598px;top:493px;" width="20" height="20" viewBox="0 0 20 20"><path d="M4 18h12a2 2 0 0 0 2-2V7a4 4 0 0 0-7-2.5A4 4 0 0 0 3 7v3a2 2 0 0 0 0 4v4z" fill="none" stroke="#444" stroke-width="1.3"/><path d="M9 17c-1-2-1-4 1-6M12 17c0-2 1-4 3-5M8 13c1 0 2 1 2 2" stroke="#444" stroke-width="1.3" fill="none"/></svg><div class="t" style="left:1594px;top:514.8px;font-size:14.5px;line-height:18.5px;color:#333;">素材</div><svg style="left:1598px;top:555px;" width="20" height="20" viewBox="0 0 20 20"><path d="M3 15.5l9-9 3 3-9 9z" fill="none" stroke="#444" stroke-width="1.4" stroke-linejoin="round"/><path d="M9.5 9l3 3" stroke="#444" stroke-width="1.2"/><path d="M5 2v5M2.5 4.5h5M16 1v5M13.5 3.5h5" stroke="#444" stroke-width="1.3"/></svg><div class="t" style="left:1594px;top:576.8px;font-size:14.5px;line-height:18.5px;color:#333;">美化</div><svg style="left:1598px;top:617px;" width="20" height="20" viewBox="0 0 20 20"><path d="M2 3c3-2 6-2 8 0v14c-2-2-5-2-8 0zM10 3c3-2 6-2 8 0v7" fill="none" stroke="#444" stroke-width="1.3"/><circle cx="14" cy="14" r="3" fill="none" stroke="#444" stroke-width="1.3"/><path d="M16 16l2.5 2.5" stroke="#444" stroke-width="1.3"/></svg><div class="t" style="left:1594px;top:638.8px;font-size:14.5px;line-height:18.5px;color:#333;">文库</div><svg style="left:1598px;top:679px;" width="20" height="20" viewBox="0 0 20 20"><path d="M6 1l-5 4 2 4 2-1v10h10V8l2 1 2-4-5-4c-1 2-5 2-8 0z" fill="none" stroke="#444" stroke-width="1.3"/><circle cx="13" cy="13" r="2.5" fill="none" stroke="#444" stroke-width="1.2"/></svg><div class="t" style="left:1594px;top:700.8px;font-size:14.5px;line-height:18.5px;color:#333;">主题</div><svg style="left:1598px;top:742px;" width="20" height="20" viewBox="0 0 20 20"><circle cx="10" cy="10" r="8.5" fill="none" stroke="#444" stroke-width="1.4"/><path d="M7 7.5a3 3 0 1 1 3 3v2" stroke="#444" stroke-width="1.4" fill="none"/><circle cx="10" cy="15" r="1" fill="#444"/></svg><div class="t" style="left:1594px;top:763.8px;font-size:14.5px;line-height:18.5px;color:#333;">帮助</div><svg style="left:1598px;top:804px;" width="20" height="20" viewBox="0 0 20 20"><circle cx="3" cy="10" r="2.2" fill="none" stroke="#444" stroke-width="1.3"/><circle cx="10" cy="10" r="2.2" fill="none" stroke="#444" stroke-width="1.3"/><circle cx="17" cy="10" r="2.2" fill="none" stroke="#444" stroke-width="1.3"/></svg><div class="t" style="left:1594px;top:825.8px;font-size:14.5px;line-height:18.5px;color:#333;">设置</div><div class="t" style="left:18px;top:933.0px;font-size:14px;line-height:18px;color:#444;word-spacing:3px">幻灯片 21 / 22</div><div style="left:125px;top:932px;width:1px;height:20px;background:#d0d2d6"></div><svg style="left:142px;top:933px;" width="20" height="19" viewBox="0 0 20 19"><path d="M6 1l-5 4 2 4 2-1v10h10V8l2 1 2-4-5-4c-1 2-5 2-8 0z" fill="none" stroke="#444" stroke-width="1.3"/><circle cx="13" cy="13" r="2.5" fill="none" stroke="#444" stroke-width="1.2"/></svg><div class="t" style="left:166px;top:932.5px;font-size:15px;line-height:19px;color:#444;">Office Theme</div><svg style="left:804px;top:933px;" width="18" height="19" viewBox="0 0 18 19"><path d="M9 1l7 4v9l-7 4-7-4V5z" fill="none" stroke="#444" stroke-width="1.4"/><path d="M2 5l7 4 7-4M9 9v9" stroke="#444" stroke-width="1" fill="none"/></svg><div class="t" style="left:826px;top:933.0px;font-size:14px;line-height:18px;color:#333;">智能美化</div><svg style="left:889px;top:939px;" width="8" height="6" viewBox="0 0 8 6"><path d="M1 1l3 3 3-3" stroke="#444" stroke-width="1.3" fill="none"/></svg><div style="left:917px;top:932px;width:1px;height:20px;background:#d0d2d6"></div><svg style="left:934px;top:934px;" width="16" height="16" viewBox="0 0 16 16"><path d="M1 2h8M1 8h14M1 14h14M11 1l2 2 2-2" stroke="#444" stroke-width="1.3" fill="none"/></svg><div class="t" style="left:957px;top:933.0px;font-size:14px;line-height:18px;color:#333;">备注</div><svg style="left:990px;top:939px;" width="8" height="6" viewBox="0 0 8 6"><path d="M1 1l3 3 3-3" stroke="#444" stroke-width="1.3" fill="none"/></svg><svg style="left:1025px;top:933px;" width="19" height="18" viewBox="0 0 19 18"><path d="M8 15H1V1h16v7" fill="none" stroke="#444" stroke-width="1.4"/><path d="M1 15v3l3-3M14 11v6M11 14h6" stroke="#444" stroke-width="1.4" fill="none"/></svg><div class="t" style="left:1049px;top:933.0px;font-size:14px;line-height:18px;color:#333;">批注</div><div style="left:1106px;top:929px;width:27px;height:28px;background:#d8dadd"></div><svg style="left:1111px;top:935px;" width="18" height="14" viewBox="0 0 18 14"><rect x="1" y="1" width="16" height="12" fill="none" stroke="#444" stroke-width="1.4"/><path d="M5 4v6" stroke="#444" stroke-width="1.4"/></svg><svg style="left:1149px;top:934px;" width="18" height="16" viewBox="0 0 18 16"><rect x="1" y="1" width="6" height="5" rx="1" fill="none" stroke="#444" stroke-width="1.3"/><rect x="10" y="1" width="6" height="5" rx="1" fill="none" stroke="#444" stroke-width="1.3"/><rect x="1" y="10" width="6" height="5" rx="1" fill="none" stroke="#444" stroke-width="1.3"/><rect x="10" y="10" width="6" height="5" rx="1" fill="none" stroke="#444" stroke-width="1.3"/></svg><svg style="left:1188px;top:934px;" width="18" height="16" viewBox="0 0 18 16"><path d="M9 3c-2-2-6-2-8-1v13c2-1 6-1 8 1 2-2 6-2 8-1V2c-2-1-6-1-8 1zM9 3v13" fill="none" stroke="#444" stroke-width="1.3"/></svg><div style="left:1221px;top:932px;width:1px;height:20px;background:#d0d2d6"></div><div style="left:1233px;top:931px;width:25px;height:22px;background:#e8661e;border-radius:3px"></div><svg style="left:1240px;top:936px;" width="12" height="12" viewBox="0 0 12 12"><path d="M2 1l9 5-9 5z" fill="#fff"/></svg><svg style="left:1268px;top:939px;" width="8" height="6" viewBox="0 0 8 6"><path d="M1 1l3 3 3-3" stroke="#444" stroke-width="1.3" fill="none"/></svg><div style="left:1292px;top:932px;width:1px;height:20px;background:#d0d2d6"></div><svg style="left:1308px;top:934px;" width="18" height="16" viewBox="0 0 18 16"><path d="M1 5V1h4M13 1h4v4M17 11v4h-4M5 15H1v-4" fill="none" stroke="#444" stroke-width="1.4"/><rect x="5" y="4.5" width="8" height="7" fill="none" stroke="#444" stroke-width="1.4"/></svg><div class="t" style="left:1353px;top:932.5px;font-size:15px;line-height:19px;color:#555;">67%</div><svg style="left:1401px;top:939px;" width="8" height="6" viewBox="0 0 8 6"><path d="M1 1l3 3 3-3" stroke="#444" stroke-width="1.3" fill="none"/></svg><div style="left:1431px;top:941px;width:14px;height:2px;background:#333"></div><div style="left:1462px;top:941px;width:128px;height:1px;background:#c5c7cb"></div><div style="left:1462px;top:940px;width:41px;height:3px;background:#3a6fd8;border-radius:1px"></div><div style="left:1498px;top:936px;width:11px;height:11px;border-radius:50%;background:#fff;box-shadow:0 0 0 1px #ccc"></div><div style="left:1501px;top:939px;width:5px;height:5px;border-radius:50%;background:#999"></div><svg style="left:1606px;top:935px;" width="15" height="15" viewBox="0 0 15 15"><path d="M7.5 1v13M1 7.5h13" stroke="#333" stroke-width="2"/></svg><div style="left:1377px;top:905px;width:210px;height:29px;background:#fff;border:1px solid #e6e6e6"></div><svg style="left:1343px;top:896px;" width="42" height="40" viewBox="0 0 42 40"><g transform="rotate(-12 21 20)"><rect x="5" y="5" width="32" height="30" rx="6" fill="#f0572a"/><path d="M28 12c-3-3-14-3-14 3s14 3 14 9-11 6-15 2" stroke="#fff" stroke-width="5" fill="none" stroke-linecap="round"/></g></svg><div class="t" style="left:1390px;top:907.5px;font-size:19px;line-height:23px;color:#1769e0;font-weight:bold">中</div><svg style="left:1422px;top:912px;" width="14" height="16" viewBox="0 0 14 16"><circle cx="3" cy="3" r="2.2" fill="#1769e0"/><path d="M11 7c1 2 0 6-3 8" stroke="#1769e0" stroke-width="2.6" fill="none"/></svg><svg style="left:1450px;top:909px;" width="14" height="20" viewBox="0 0 14 20"><rect x="3.5" y="1" width="7" height="11" rx="3.5" fill="#1769e0"/><path d="M1 9a6 6 0 0 0 12 0M7 15v4" stroke="#1769e0" stroke-width="1.6" fill="none"/></svg><svg style="left:1477px;top:910px;" width="19" height="16" viewBox="0 0 19 16"><rect x="1" y="1" width="17" height="13" rx="2" fill="none" stroke="#1769e0" stroke-width="1.8"/><path d="M4 5h2M8 5h2M12 5h2M4 8h2M8 8h2M12 8h2M5 11h9" stroke="#1769e0" stroke-width="1.5"/></svg><svg style="left:1504px;top:906px;" width="25" height="24" viewBox="0 0 25 24"><path d="M2 8l5-4h10l5 4-3 4h-2v10H7V12H5z" fill="#8a5ce8"/><path d="M7 6h10v8H7z" fill="#e86aa0" opacity=".7"/><circle cx="21" cy="4" r="3.5" fill="#f04030"/></svg><svg style="left:1534px;top:909px;" width="21" height="19" viewBox="0 0 21 19"><path d="M5 2h11a4 4 0 0 1 4 4v8a3 3 0 0 1-5 1l-2-2H8l-2 2a3 3 0 0 1-5-1V6a4 4 0 0 1 4-4z" fill="#1769e0"/><path d="M5 7v4M3 9h4" stroke="#fff" stroke-width="1.5"/><circle cx="14" cy="9" r="1.5" fill="#fff"/></svg><svg style="left:1563px;top:910px;" width="19" height="18" viewBox="0 0 19 18"><rect x="1" y="1" width="7" height="7" rx="2" fill="#1769e0"/><rect x="10" y="1" width="7" height="7" rx="2" fill="#1769e0"/><rect x="1" y="10" width="7" height="7" rx="2" fill="#1769e0"/><rect x="10" y="10" width="7" height="7" rx="2" fill="#1769e0"/></svg><svg style="left:14px;top:965px;" width="20" height="20" viewBox="0 0 20 20"><path d="M0 3l8-1.2v8H0zM9.5 1.6L20 0v9.8H9.5zM0 11.2h8v8L0 18zM9.5 11.2H20V20l-10.5-1.5z" fill="#fff"/></svg><svg style="left:56px;top:965px;" width="22" height="21" viewBox="0 0 22 21"><circle cx="13" cy="8" r="6.5" fill="none" stroke="#fff" stroke-width="2"/><path d="M8.5 12.5L2 19" stroke="#fff" stroke-width="2.2"/></svg><svg style="left:103px;top:965px;" width="20" height="20" viewBox="0 0 20 20"><g transform="rotate(0 10 10)"><path d="M10 10V2.5C10 1 8.5 0.5 7 0.5H3.5C1.5 0.5 0.5 1.5 0.5 3.5V7C0.5 9 1.5 10 3.5 10z" fill="#f2f2f2"/><path d="M10 4.5c-2 0-4 1-4.5 3" stroke="#1c1d1f" stroke-width="1.3" fill="none"/></g><g transform="rotate(90 10 10)"><path d="M10 10V2.5C10 1 8.5 0.5 7 0.5H3.5C1.5 0.5 0.5 1.5 0.5 3.5V7C0.5 9 1.5 10 3.5 10z" fill="#f2f2f2"/><path d="M10 4.5c-2 0-4 1-4.5 3" stroke="#1c1d1f" stroke-width="1.3" fill="none"/></g><g transform="rotate(180 10 10)"><path d="M10 10V2.5C10 1 8.5 0.5 7 0.5H3.5C1.5 0.5 0.5 1.5 0.5 3.5V7C0.5 9 1.5 10 3.5 10z" fill="#f2f2f2"/><path d="M10 4.5c-2 0-4 1-4.5 3" stroke="#1c1d1f" stroke-width="1.3" fill="none"/></g><g transform="rotate(270 10 10)"><path d="M10 10V2.5C10 1 8.5 0.5 7 0.5H3.5C1.5 0.5 0.5 1.5 0.5 3.5V7C0.5 9 1.5 10 3.5 10z" fill="#f2f2f2"/><path d="M10 4.5c-2 0-4 1-4.5 3" stroke="#1c1d1f" stroke-width="1.3" fill="none"/></g></svg><svg style="left:150px;top:964px;" width="20" height="22" viewBox="0 0 20 22"><circle cx="10" cy="12" r="8" fill="#2d7de0"/><path d="M5 12h10M5 12a5 5 0 0 1 10 0M6 15a5 5 0 0 0 8 1" stroke="#fff" stroke-width="2" fill="none"/><path d="M2 6c4-5 14-6 16-3" stroke="#2d7de0" stroke-width="1.5" fill="none"/></svg><svg style="left:175px;top:970px;" width="7" height="10" viewBox="0 0 7 10"><path d="M1 1l5 4-5 4z" fill="#2d8de8"/></svg><svg style="left:201px;top:964px;" width="22" height="22" viewBox="0 0 22 22"><circle cx="11" cy="11" r="10" fill="#e8f0e0"/><circle cx="11" cy="11" r="8" fill="none" stroke="#4aa830" stroke-width="1"/><path d="M6 11h10a5 5 0 1 0-1.5 3.5" stroke="#3aa020" stroke-width="2" fill="none"/></svg><svg style="left:246px;top:965px;" width="21" height="19" viewBox="0 0 21 19"><path d="M1 3h7l2 2h10v13H1z" fill="#f5c445"/><rect x="1" y="7" width="19" height="11" fill="#ffd966"/><rect x="6" y="10" width="9" height="6" fill="#3a7bd5"/></svg><div style="left:240px;top:991px;width:34px;height:2px;background:#76b9ed"></div><svg style="left:290px;top:963px;" width="22" height="23" viewBox="0 0 22 23"><rect x="2" y="6" width="18" height="14" rx="3" fill="#9aa0e8"/><rect x="5" y="2" width="10" height="6" rx="1" fill="#fff"/><text x="3" y="17" font-size="8" font-weight="bold" fill="#fff" font-family="Liberation Sans">ICO</text></svg><div style="left:284px;top:991px;width:34px;height:2px;background:#76b9ed"></div><div style="left:324px;top:957px;width:43px;height:36px;background:#4a4b4e"></div><svg style="left:335px;top:966px;" width="21" height="17" viewBox="0 0 21 17"><path d="M1 2l4 13 5-9 5 9 4-13" stroke="#e0302a" stroke-width="3" fill="none"/></svg><div style="left:324px;top:991px;width:43px;height:2px;background:#76b9ed"></div><div style="left:368px;top:957px;width:43px;height:36px;background:#a8612f"></div><svg style="left:379px;top:964px;" width="22" height="21" viewBox="0 0 22 21"><circle cx="8" cy="9" r="7" fill="#3cc03c"/><circle cx="15" cy="14" r="6" fill="#f0f0f0"/><circle cx="5.5" cy="8" r="1" fill="#fff"/><circle cx="10" cy="8" r="1" fill="#fff"/></svg><div style="left:368px;top:991px;width:43px;height:2px;background:#f0a050"></div><svg style="left:424px;top:964px;" width="20" height="20" viewBox="0 0 20 20"><rect x="0" y="0" width="20" height="20" rx="2" fill="#1a6ed8"/><path d="M3 14l4-6 3 4 3-5 4 7" stroke="#fff" stroke-width="2.2" fill="none"/></svg><div style="left:417px;top:991px;width:34px;height:2px;background:#76b9ed"></div><svg style="left:1240px;top:968px;" width="17" height="11" viewBox="0 0 17 11"><path d="M1 9l7.5-7.5L16 9" stroke="#fff" stroke-width="1.5" fill="none"/></svg><svg style="left:1269px;top:964px;" width="15" height="22" viewBox="0 0 15 22"><rect x="4" y="1" width="7" height="13" rx="3.5" fill="#f0f0f0"/><path d="M1.5 10a6 6 0 0 0 12 0M7.5 16v4M4 21h7" stroke="#ddd" stroke-width="1.3" fill="none"/></svg><svg style="left:1295px;top:965px;" width="22" height="20" viewBox="0 0 22 20"><rect x="1" y="1" width="19" height="14" fill="none" stroke="#eee" stroke-width="1.4"/><path d="M6 10l4-4M7 6h3v3" stroke="#eee" stroke-width="1.2" fill="none"/><circle cx="16" cy="15" r="4" fill="#f08a24"/></svg><svg style="left:1324px;top:967px;" width="22" height="15" viewBox="0 0 22 15"><path d="M2 3v4M5 3v4M1 7h6v3H1zM4 10v3" stroke="#eee" stroke-width="1.3" fill="none"/><rect x="8" y="4" width="12" height="8" fill="none" stroke="#eee" stroke-width="1.4"/><rect x="10" y="6" width="8" height="4" fill="#eee"/></svg><svg style="left:1355px;top:965px;" width="19" height="19" viewBox="0 0 19 19"><path d="M2 17a15 15 0 0 1 15-15M5 17a12 12 0 0 1 12-12M8 17a9 9 0 0 1 9-9M11 17a6 6 0 0 1 6-6" stroke="#ddd" stroke-width="1.3" fill="none"/><circle cx="16" cy="16" r="1.5" fill="#fff"/></svg><svg style="left:1381px;top:964px;" width="22" height="21" viewBox="0 0 22 21"><path d="M1 7h4l5-5v17l-5-5H1z" fill="none" stroke="#eee" stroke-width="1.4"/><path d="M13 6a6 6 0 0 1 0 9M16 3a10 10 0 0 1 0 15" stroke="#eee" stroke-width="1.4" fill="none"/></svg><div class="t" style="left:1412px;top:963.5px;font-size:17px;line-height:21px;color:#fff;-webkit-text-stroke:0;">中</div><svg style="left:1444px;top:964px;" width="22" height="21" viewBox="0 0 22 21"><g transform="rotate(-12 11 10)"><rect x="2" y="2" width="18" height="17" rx="3" fill="#e8501f"/><path d="M15 6c-2-1.5-7-1.5-7 1.5s7 1.5 7 5-6 3-8 1" stroke="#fff" stroke-width="2.6" fill="none"/></g></svg><div class="t" style="left:1484px;top:964.5px;font-size:15px;line-height:19px;color:#fff;-webkit-text-stroke:0;">10:50</div><svg style="left:1544px;top:965px;" width="21" height="19" viewBox="0 0 21 19"><rect x="1" y="1" width="19" height="17" fill="none" stroke="#fff" stroke-width="1.5"/><path d="M8 5.5l6 4-6 4z" fill="#fff"/></svg><svg style="left:1591px;top:964px;" width="22" height="22" viewBox="0 0 22 22"><path d="M1 1h19v14h-9l-4 4v-4H1z" fill="#fff"/><path d="M4 5h13M4 8h13M4 11h8" stroke="#1c1d1f" stroke-width="1.2"/><circle cx="17" cy="17" r="3.5" fill="#ccc"/></svg><div style="left:1636px;top:957px;width:1px;height:36px;background:#444"></div><div style="left:4px;top:998px;width:177px;height:26px;background:#0f1011;border-radius:0 7px 0 0"></div><svg style="left:8px;top:1003px;" width="16" height="18" viewBox="0 0 16 18"><rect x="4" y="1" width="8" height="12" rx="4" fill="#fff"/><path d="M4 8h8v1a4 4 0 0 1-8 0z" fill="#55e640"/><rect x="4" y="7" width="8" height="6" rx="0" fill="#55e640"/><path d="M1 9a7 7 0 0 0 14 0M8 16v2" stroke="#fff" stroke-width="1.5" fill="none"/></svg><svg style="left:29px;top:1004px;" width="19" height="18" viewBox="0 0 19 18"><rect x="1" y="1" width="17" height="12" rx="2" fill="#fff"/><path d="M6 10c1-3 3-4 6-4M10 4l2 2-2 2" stroke="#111" stroke-width="1.4" fill="none"/><rect x="4" y="15" width="11" height="2" fill="#fff"/></svg><div class="t" style="left:51px;top:1003.5px;font-size:15px;line-height:19px;color:#fff;-webkit-text-stroke:0;">陈锦文的屏幕共享</div><div style="left:1651px;top:36px;width:256px;height:143px;background:#2b2e32;border:2px solid #0fcc5a"></div><div style="left:1651px;top:190px;width:256px;height:143px;background:#2b2e32;border:2px solid #5f6267"></div><div style="left:1651px;top:344px;width:256px;height:143px;background:#2b2e32;border:2px solid #5f6267"></div><div style="left:1651px;top:498px;width:256px;height:143px;background:#2b2e32;border:2px solid #5f6267"></div><div style="left:1651px;top:652px;width:256px;height:143px;background:#2b2e32;border:2px solid #5f6267"></div><div style="left:1651px;top:806px;width:256px;height:143px;background:#2b2e32;border:2px solid #5f6267"></div><div style="left:1651px;top:960px;width:256px;height:143px;background:#2b2e32;border:2px solid #5f6267"></div><svg style="left:1738px;top:53px" width="80" height="80" viewBox="0 0 80 80"><defs><clipPath id="ca1"><circle cx="40" cy="40" r="39.5"/></clipPath><filter id="ba1"><feGaussianBlur stdDeviation="0.7"/></filter></defs><g clip-path="url(#ca1)"><g filter="url(#ba1)"><rect x="-5" y="-5" width="90" height="90" fill="#5e4a30"/><rect x="-5" y="-5" width="90" height="30" fill="#d8dde6"/><ellipse cx="52" cy="10" rx="12" ry="3.5" fill="#4a86d8"/><ellipse cx="58" cy="19" rx="7" ry="1.8" fill="#6a9ede"/><ellipse cx="26" cy="15" rx="16" ry="6" fill="#f2f2f4"/><ellipse cx="12" cy="23" rx="10" ry="3" fill="#b8bcc6"/><path d="M-5 30l12-4 10 1 10-4 10 3 14-3 10-3 20 1v12H-5z" fill="#bfb09e"/><path d="M20 27l8-4 8 3 6-2v6H20z" fill="#e8e0d6"/><path d="M-5 33h40v2H-5z" fill="#3a3a3a"/><path d="M36 37l12-8 16-5 12-1 10 2v30H36z" fill="#54463a"/><rect x="-5" y="36" width="41" height="8" fill="#a8b0bc"/><path d="M-5 44h42l48-3v45H-5z" fill="#6a5434"/><path d="M8 50c12-4 30-2 40 0s20 2 35 0v6c-15 2-30 0-45 2s-25 2-30 0z" fill="#8a6c3a"/><path d="M50 44l20 2 10 6-8 4-20-4z" fill="#7a7050"/><ellipse cx="12" cy="64" rx="12" ry="9" fill="#4a2e26"/><ellipse cx="60" cy="68" rx="8" ry="6" fill="#3e5888"/><ellipse cx="40" cy="63" rx="8" ry="4" fill="#9a8070"/><ellipse cx="30" cy="73" rx="10" ry="5" fill="#4a4a54"/><ellipse cx="48" cy="80" rx="18" ry="5" fill="#5e5030"/><ellipse cx="72" cy="57" rx="8" ry="6" fill="#7e7a64"/></g></g></svg><svg style="left:1738px;top:206px" width="80" height="80" viewBox="0 0 80 80"><defs><clipPath id="ca2"><circle cx="40" cy="40" r="39.5"/></clipPath><filter id="ba2"><feGaussianBlur stdDeviation="0.7"/></filter></defs><g clip-path="url(#ca2)"><g filter="url(#ba2)"><rect x="-5" y="-5" width="90" height="90" fill="#f0f1f5"/><path d="M22 30c4-16 16-24 28-24s20 8 22 20l-4 8-10-6-14-2-12 6-6 8z" fill="#464c60"/><path d="M12 56c-2-12 2-24 10-30l6 4-6 16 2 18-4 6z" fill="#3a4054"/><path d="M22 40l6-8 4 4-4 28 2 14-6-4-4-18z" fill="#50587a"/><path d="M30 34l6-4 2 8-4 26-4 4z" fill="#2e3446"/><path d="M64 30l6 2 2 14-4 18-3-2 1-16z" fill="#4a5470"/><ellipse cx="51" cy="46" rx="12" ry="12" fill="#f3eef2"/><path d="M38 38c3-9 16-12 26-5l-1 5-12-3-10 5z" fill="#464c60"/><ellipse cx="42" cy="42" rx="2.6" ry="2.1" fill="#5a5aa0"/><ellipse cx="58" cy="39" rx="2.6" ry="2.1" fill="#5a5aa0"/><path d="M38 60l12 2 4 20H34z" fill="#2a2e3c"/><path d="M51 61l4 14 5-2-3-12z" fill="#e8c4c4"/><ellipse cx="38" cy="22" rx="4" ry="2.2" fill="#e8e8ee"/></g></g></svg><div style="left:1739px;top:361px;width:79px;height:79px;border-radius:50%;background:#3c6ebe"></div><div class="t" style="left:1746px;top:382.0px;font-size:32px;line-height:40px;color:#fff;-webkit-text-stroke:0;">安辉</div><svg style="left:1738px;top:514px" width="80" height="80" viewBox="0 0 80 80"><defs><clipPath id="ca4"><circle cx="40" cy="40" r="39.5"/></clipPath><filter id="ba4"><feGaussianBlur stdDeviation="0.7"/></filter></defs><g clip-path="url(#ca4)"><g filter="url(#ba4)"><rect x="-5" y="-5" width="90" height="90" fill="#dad3c4"/><path d="M20 85c1-12 4-22 18-26 14 4 17 14 18 26z" fill="#2a2624"/><path d="M26 85c1-10 3-19 12-22 9 3 11 12 12 22z" fill="#eee8e8"/><rect x="34" y="52" width="8" height="8" fill="#d8b0a0"/><circle cx="38" cy="44" r="10.5" fill="#262020"/><ellipse cx="32" cy="30" rx="3.5" ry="3" fill="#2e2a28"/><ellipse cx="51" cy="35" rx="4" ry="2.5" fill="#2e2a28"/><path d="M34 35l-2-4M45 38l6-2" stroke="#2e2a28" stroke-width="1.5"/></g></g></svg><svg style="left:1738px;top:668px" width="80" height="80" viewBox="0 0 80 80"><defs><clipPath id="ca5"><circle cx="40" cy="40" r="39.5"/></clipPath><filter id="ba5"><feGaussianBlur stdDeviation="0.7"/></filter></defs><g clip-path="url(#ca5)"><g filter="url(#ba5)"><rect x="-5" y="-5" width="90" height="90" fill="#ddd6d8"/><path d="M-5 -5h90v20c-10 4-20-2-30 2s-20-4-30 0-20 2-30-2z" fill="#a89494"/><path d="M0 20l18 6M60 15l20 12M70 30l10 4" stroke="#b09a9a" stroke-width="2"/><path d="M20 85c0-22 6-40 20-42 14 0 22 8 32 14l10 8-4 20z" fill="#a8998a"/><path d="M52 52l22 4 8 12-8 8-22-8z" fill="#bcae9e"/><path d="M26 18l4-10 8 8zM55 17l-2-10-8 8z" fill="#b4a494"/><ellipse cx="41" cy="29" rx="16" ry="14" fill="#bcae9e"/><ellipse cx="35" cy="24" rx="2.5" ry="1.6" fill="#a8a050"/><ellipse cx="47" cy="24" rx="2.5" ry="1.6" fill="#a8a050"/><ellipse cx="41" cy="29" rx="2" ry="1.4" fill="#c87868"/><ellipse cx="10" cy="50" rx="10" ry="9" fill="#2a2424"/><ellipse cx="25" cy="55" rx="7" ry="12" fill="#302828"/><ellipse cx="12" cy="63" rx="6" ry="4" fill="#ece4e4"/></g></g></svg><svg style="left:1738px;top:822px" width="80" height="80" viewBox="0 0 80 80"><defs><clipPath id="ca6"><circle cx="40" cy="40" r="39.5"/></clipPath><filter id="ba6"><feGaussianBlur stdDeviation="0.7"/></filter></defs><g clip-path="url(#ca6)"><g filter="url(#ba6)"><rect x="-5" y="-5" width="90" height="90" fill="#1c2232"/><rect x="-5" y="-5" width="90" height="15" fill="#4a5a88"/><rect x="-5" y="10" width="90" height="9" fill="#8a5a6a"/><rect x="-5" y="19" width="90" height="5" fill="#e8683a"/><rect x="-5" y="24" width="90" height="4" fill="#f6c428"/><rect x="-5" y="28" width="90" height="8" fill="#a84a3c"/><rect x="-5" y="36" width="90" height="10" fill="#7a3a42"/><rect x="-5" y="46" width="90" height="10" fill="#4a3448"/><ellipse cx="22" cy="48" rx="10" ry="3.5" fill="#151515"/><ellipse cx="55" cy="45" rx="12" ry="5" fill="#151515"/><path d="M-5 58c20-2 40-6 60-2s30 6 30 6v25H-5z" fill="#202838"/><path d="M-5 70l50 10H-5z" fill="#141820"/><path d="M54 56h30v30H54z" fill="#fff"/><path d="M58 60h26v26H58z" fill="#e43a28"/><circle cx="63" cy="66" r="2" fill="#f6d030"/></g></g></svg><div style="left:1738px;top:822px;width:80px;height:80px;border-radius:50%;box-shadow:inset 0 0 0 3px #f4f4f4"></div><svg style="left:1738px;top:976px" width="80" height="80" viewBox="0 0 80 80"><defs><clipPath id="ca7"><circle cx="40" cy="40" r="39.5"/></clipPath><filter id="ba7"><feGaussianBlur stdDeviation="0.7"/></filter></defs><g clip-path="url(#ca7)"><g filter="url(#ba7)"><rect x="-5" y="-5" width="90" height="90" fill="#46404f"/><path d="M0 18l8 2 6 28H0z" fill="#9a92a4"/><path d="M14 30l14 6 10-2 12 2 12-4 6 10-4 10H14z" fill="#6a6070"/><path d="M12 60l6-22 8 4 6-6 8 4 8-4 8 6 6 18z" fill="#f6f2f0"/><path d="M62 34l22 6v14l-22-4z" fill="#c8c0c8"/></g></g></svg><div style="left:1642px;top:1024px;width:276px;height:2px;background:#2dbd4b"></div><div style="left:1653px;top:150px;width:161px;height:27px;background:#0f1011;border-radius:0 7px 0 0"></div><svg style="left:1656px;top:155px;" width="17" height="19" viewBox="0 0 17 19"><rect x="4" y="1" width="9" height="12" rx="4.5" fill="#fff"/><path d="M4 7h9v2a4.5 4.5 0 0 1-9 0z" fill="#55e640"/><path d="M1 9a7.5 7.5 0 0 0 15 0M8.5 16.5v2" stroke="#fff" stroke-width="1.5" fill="none"/></svg><svg style="left:1678px;top:156px;" width="19" height="18" viewBox="0 0 19 18"><rect x="1" y="1" width="17" height="12" rx="2" fill="#fff"/><path d="M6 10c1-3 3-4 6-4M10 4l2 2-2 2" stroke="#111" stroke-width="1.4" fill="none"/><rect x="4" y="15" width="11" height="2" fill="#fff"/></svg><div class="t" style="left:1700px;top:155.5px;font-size:15px;line-height:19px;color:#fff;-webkit-text-stroke:0;">陈锦文正在共享</div><div style="left:1653px;top:303px;width:161px;height:28px;background:#0f1011;border-radius:0 7px 0 0"></div><div style="left:1653px;top:303px;width:27px;height:28px;background:#f07c1c"></div><svg style="left:1657px;top:308px;" width="19" height="18" viewBox="0 0 19 18"><circle cx="9.5" cy="5" r="4" fill="#fff"/><path d="M1 17a8.5 6 0 0 1 17 0z" fill="#fff"/></svg><svg style="left:1684px;top:309px;" width="17" height="18" viewBox="0 0 17 18"><rect x="5" y="1" width="7" height="10" rx="3.5" fill="#fff"/><path d="M2 8a6.5 6.5 0 0 0 13 0M8.5 14.5v3" stroke="#fff" stroke-width="1.4" fill="none"/><path d="M1 17L16 2" stroke="#e0523e" stroke-width="1.8"/></svg><div class="t" style="left:1707px;top:308.0px;font-size:16px;line-height:20px;color:#fff;-webkit-text-stroke:0;">NanFengWan</div><div style="left:1653px;top:458px;width:82px;height:28px;background:#0f1011;border-radius:0 7px 0 0"></div><svg style="left:1656px;top:463px;" width="17" height="18" viewBox="0 0 17 18"><rect x="5" y="1" width="7" height="10" rx="3.5" fill="#fff"/><path d="M2 8a6.5 6.5 0 0 0 13 0M8.5 14.5v3" stroke="#fff" stroke-width="1.4" fill="none"/><path d="M1 17L16 2" stroke="#e0523e" stroke-width="1.8"/></svg><div class="t" style="left:1678px;top:463.5px;font-size:15px;line-height:19px;color:#fff;-webkit-text-stroke:0;">胡安辉</div><div style="left:1653px;top:612px;width:126px;height:28px;background:#0f1011;border-radius:0 7px 0 0"></div><svg style="left:1656px;top:617px;" width="17" height="18" viewBox="0 0 17 18"><rect x="5" y="1" width="7" height="10" rx="3.5" fill="#fff"/><path d="M2 8a6.5 6.5 0 0 0 13 0M8.5 14.5v3" stroke="#fff" stroke-width="1.4" fill="none"/><path d="M1 17L16 2" stroke="#e0523e" stroke-width="1.8"/></svg><div class="t" style="left:1678px;top:617.5px;font-size:15px;line-height:19px;color:#fff;-webkit-text-stroke:0;">环境一班文豪</div><div style="left:1653px;top:766px;width:65px;height:28px;background:#0f1011;border-radius:0 7px 0 0"></div><svg style="left:1656px;top:771px;" width="17" height="18" viewBox="0 0 17 18"><rect x="5" y="1" width="7" height="10" rx="3.5" fill="#fff"/><path d="M2 8a6.5 6.5 0 0 0 13 0M8.5 14.5v3" stroke="#fff" stroke-width="1.4" fill="none"/><path d="M1 17L16 2" stroke="#e0523e" stroke-width="1.8"/></svg><div class="t" style="left:1678px;top:771.5px;font-size:15px;line-height:19px;color:#fff;-webkit-text-stroke:0;">李思</div><div style="left:1653px;top:920px;width:80px;height:28px;background:#0f1011;border-radius:0 7px 0 0"></div><svg style="left:1656px;top:925px;" width="17" height="18" viewBox="0 0 17 18"><rect x="5" y="1" width="7" height="10" rx="3.5" fill="#fff"/><path d="M2 8a6.5 6.5 0 0 0 13 0M8.5 14.5v3" stroke="#fff" stroke-width="1.4" fill="none"/><path d="M1 17L16 2" stroke="#e0523e" stroke-width="1.8"/></svg><div class="t" style="left:1678px;top:925.5px;font-size:15px;line-height:19px;color:#fff;-webkit-text-stroke:0;">朱俊秋</div><div style="left:1888px;top:190px;width:27px;height:32px;background:#202225;border-radius:8px 0 0 8px"></div><svg style="left:1893px;top:198px;" width="18" height="15" viewBox="0 0 18 15"><path d="M1.5 1v13M17 7.5H5M10 2.5l-5 5 5 5" stroke="#ddd" stroke-width="1.5" fill="none"/></svg></body></html>
